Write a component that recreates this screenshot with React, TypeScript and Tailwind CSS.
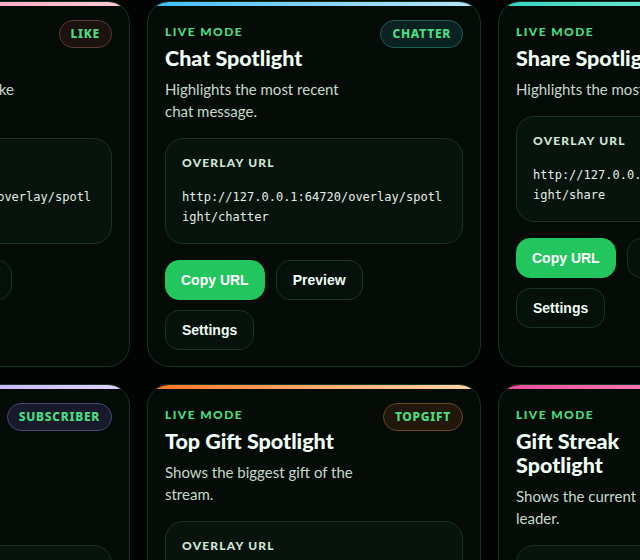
import React from "react";

type Spotlight = {
  title: string;
  badge: string;
  description: string;
  slug: string;
  stripe: string;
  badgeTone: string;
};

const spotlights: Spotlight[] = [
  {
    title: "Like Spotlight",
    badge: "LIKE",
    description: "Highlights the most recent like notification.",
    slug: "like",
    stripe: "bg-gradient-to-r from-[#f472b6] to-[#fecdd3]",
    badgeTone: "bg-[#1c1210] border-[#5b3a33]",
  },
  {
    title: "Chat Spotlight",
    badge: "CHATTER",
    description: "Highlights the most recent chat message.",
    slug: "chatter",
    stripe: "bg-gradient-to-r from-[#38bdf8] to-[#bae6fd]",
    badgeTone: "bg-[#0a2322] border-[#1e5a57]",
  },
  {
    title: "Share Spotlight",
    badge: "SHARE",
    description: "Highlights the most recent share.",
    slug: "share",
    stripe: "bg-gradient-to-r from-[#2dd4bf] to-[#99f6e4]",
    badgeTone: "bg-[#0a2322] border-[#1e5a57]",
  },
  {
    title: "Subscriber Spotlight",
    badge: "SUBSCRIBER",
    description: "Highlights the newest subscriber.",
    slug: "subscriber",
    stripe: "bg-gradient-to-r from-[#a78bfa] to-[#ddd6fe]",
    badgeTone: "bg-[#181a2b] border-[#474a78]",
  },
  {
    title: "Top Gift Spotlight",
    badge: "TOPGIFT",
    description: "Shows the biggest gift of the stream.",
    slug: "topgift",
    stripe: "bg-gradient-to-r from-[#f97316] to-[#fed7aa]",
    badgeTone: "bg-[#21180b] border-[#6a4a1c]",
  },
  {
    title: "Gift Streak Spotlight",
    badge: "GIFTSTREAK",
    description: "Shows the current streak leader.",
    slug: "giftstreak",
    stripe: "bg-gradient-to-r from-[#ec4899] to-[#f9a8d4]",
    badgeTone: "bg-[#22101a] border-[#6b2d4d]",
  },
];

const sans = "font-['Lato','Noto_Sans',sans-serif]";

function SpotlightCard({ s }: { s: Spotlight }) {
  const url = `http://127.0.0.1:64720/overlay/spotlight/${s.slug}`;
  return (
    <div className="relative overflow-hidden rounded-[22px] border border-[#173422] bg-[#050c08] px-[17px] pt-[18px] pb-[16px]">
      <div className={`absolute left-0 right-0 top-0 h-[4px] ${s.stripe}`} />
      <div className="flex items-start justify-between gap-[14px]">
        <div className="min-w-0 flex-1 pt-[4px]">
          <div className={`${sans} text-[12px] leading-4 font-black tracking-[0.12em] text-[#4ade80]`}>
            LIVE MODE
          </div>
          <div className={`${sans} mt-[6px] text-[21.5px] leading-[24px] font-black text-[#f0fdf4]`}>
            {s.title}
          </div>
          <div className={`${sans} mt-[8px] text-[15px] leading-[22px] text-[#c5d8cb]`}>
            {s.description}
          </div>
        </div>
        <span
          className={`shrink-0 rounded-full border px-[11px] py-[5px] font-['Noto_Sans',sans-serif] text-[12px] leading-4 font-extrabold tracking-[0.06em] text-[#4ade80] ${s.badgeTone}`}
        >
          {s.badge}
        </span>
      </div>

      <div className="mt-4 rounded-[18px] border border-[#173422] bg-[#08130d] p-4">
        <div className={`${sans} text-[12px] leading-4 font-black tracking-[0.1em] text-[#cfe6d5]`}>
          OVERLAY URL
        </div>
        <div className="mt-4 break-all font-['DejaVu_Sans_Mono',monospace] text-[12px] leading-5 text-[#e3ede6]">
          {url}
        </div>
      </div>

      <div className="mt-4 flex flex-col gap-[10px] font-['Liberation_Sans',Arial,sans-serif] text-[14px] font-bold">
        <div className="flex gap-[11px]">
          <button className="h-10 rounded-[14px] border border-[#22c55e] bg-[#22c55e] px-[15px] text-white">
            Copy URL
          </button>
          <button className="h-10 rounded-[14px] border border-[#173422] bg-[#07110b] px-4 text-[#f0fdf4]">
            Preview
          </button>
        </div>
        <div className="flex">
          <button className="h-10 rounded-[14px] border border-[#173422] bg-[#07110b] px-4 text-[#f0fdf4]">
            Settings
          </button>
        </div>
      </div>
    </div>
  );
}

export default function App() {
  return (
    <div className="h-[560px] w-[640px] overflow-hidden bg-[#020403]">
      <div className="-ml-[204px] mt-[1px] grid grid-cols-[repeat(3,334px)] gap-[17px]">
        {spotlights.map((s) => (
          <SpotlightCard key={s.slug} s={s} />
        ))}
      </div>
    </div>
  );
}
